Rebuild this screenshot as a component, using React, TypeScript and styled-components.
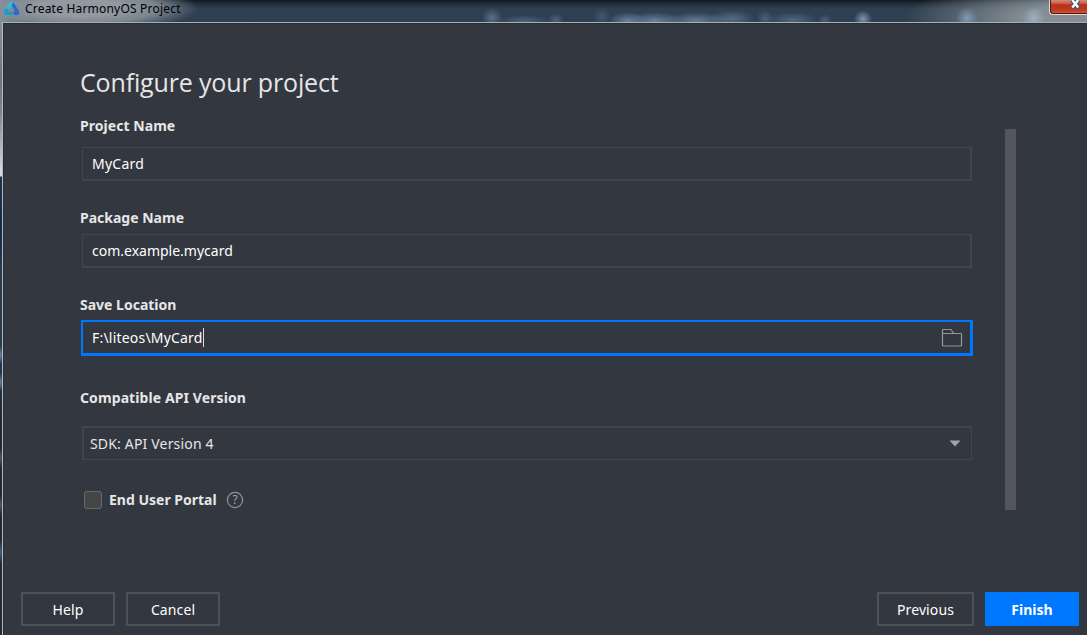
import React from 'react';
import styled, { createGlobalStyle } from 'styled-components';

const panelColor = '#333740';
const fieldBorderColor = '#414550';
const buttonBorderColor = '#4e5155';
const accentColor = '#0077ff';
const textColor = '#e6e6e6';

const GlobalStyle = createGlobalStyle`
  * {
    box-sizing: border-box;
  }

  body {
    margin: 0;
    overflow: hidden;
    font-family: 'Noto Sans', 'Open Sans', sans-serif;
    font-size: 14px;
    color: ${textColor};
  }
`;

const Window = styled.div`
  display: grid;
  grid-template-rows: 22px 1fr;
  width: 1087px;
  height: 635px;
  background: #26394d;
`;

const TitleBar = styled.header`
  display: flex;
  align-items: flex-start;
  justify-content: space-between;
  overflow: hidden;
  background:
    radial-gradient(ellipse 10px 10px at 492px 18px, #5c7187, transparent),
    radial-gradient(ellipse 28px 6px at 524px 21px, #4c6278, transparent),
    radial-gradient(ellipse 8px 7px at 556px 20px, #4c6278, transparent),
    radial-gradient(ellipse 9px 9px at 602px 17px, #43586d, transparent),
    radial-gradient(ellipse 20px 9px at 628px 21px, #6982a0, transparent),
    radial-gradient(ellipse 28px 9px at 655px 21px, #6982a0, transparent),
    radial-gradient(ellipse 34px 9px at 696px 21px, #647c97, transparent),
    radial-gradient(ellipse 24px 9px at 732px 19px, #566d86, transparent),
    radial-gradient(ellipse 9px 9px at 765px 19px, #4b6178, transparent),
    radial-gradient(ellipse 26px 8px at 793px 20px, #4f667e, transparent),
    radial-gradient(ellipse 7px 6px at 825px 20px, #4b6178, transparent),
    radial-gradient(ellipse 9px 9px at 863px 19px, #7c94b0, transparent),
    radial-gradient(ellipse 11px 11px at 967px 18px, #8098b5, transparent),
    radial-gradient(ellipse 11px 11px at 1034px 18px, #9fb0c2, transparent),
    radial-gradient(ellipse 170px 40px at 1075px 18px, #858e95 30%, transparent),
    linear-gradient(#111921, #222f3c 4px, #304051 9px, #2e3f51);
`;

const TitleGroup = styled.div`
  display: flex;
  align-items: center;
  width: 200px;
  height: 22px;
  padding: 0 0 5px 4px;
  background:
    linear-gradient(90deg, #858f9a, transparent 34px),
    radial-gradient(ellipse 120px 24px at 79px 8px, #9299a1 35%, #7b858f 65%, transparent);
`;

const Logo = styled.svg`
  flex: none;
  margin-right: 5px;
`;

const TitleText = styled.span`
  font-size: 12px;
  line-height: 17px;
  letter-spacing: 0.2px;
  white-space: nowrap;
  color: #000;
`;

const CloseButton = styled.button`
  display: flex;
  justify-content: center;
  width: 38px;
  height: 15px;
  padding: 0 0 0 12px;
  border: 1px solid #e3d6d3;
  border-top: 0;
  border-right: 0;
  border-radius: 0 0 0 4px;
  background: linear-gradient(#d88a7a, #c96452 3px, #b8301a 5px, #bd3a20 10px, #d5633c);
  box-shadow: inset 1px -1px 0 #4c1913;
`;

const Frame = styled.div`
  display: grid;
  grid-template-columns: 2px 1fr;
`;

const GlassEdge = styled.div`
  background:
    radial-gradient(ellipse 4px 9px at 0 333px, #6888ab, transparent),
    radial-gradient(ellipse 4px 9px at 0 360px, #6888ab, transparent),
    radial-gradient(ellipse 4px 10px at 0 436px, #5c5c5d, transparent),
    radial-gradient(ellipse 4px 10px at 0 483px, #5c5c5d, transparent),
    radial-gradient(ellipse 4px 12px at 0 530px, #4d6580, transparent),
    linear-gradient(
      #858e9a,
      #6b7482 60px,
      #7c8798 90px,
      #d7d9db 150px,
      #d7d9db 154px,
      #1d3349 155px,
      #122c46 210px,
      #2a3b4d 250px,
      #2a3b4d 320px,
      #1f2937 400px,
      #202c3b
    );
`;

const Dialog = styled.main`
  display: flex;
  flex-direction: column;
  justify-content: space-between;
  border-top: 1px solid #a8b0b6;
  border-left: 1px solid #b4babd;
  background: ${panelColor};
  box-shadow: inset 1px 1px 0 #282e35;
`;

const Body = styled.div`
  display: flex;
  justify-content: space-between;
  padding: 43px 71px 0 77px;
`;

const Form = styled.form`
  display: flex;
  flex-direction: column;
  width: 893px;
`;

const Heading = styled.h1`
  height: 50px;
  margin: 0;
  font-family: 'Open Sans', 'Noto Sans', sans-serif;
  font-size: 25px;
  font-weight: 400;
  line-height: 33px;
  letter-spacing: -0.15px;
`;

const Field = styled.div<{ $height: number; $gap: number }>`
  display: flex;
  flex-direction: column;
  gap: ${(props) => props.$gap}px;
  height: ${(props) => props.$height}px;
`;

const Label = styled.label<{ $spacing?: number }>`
  font-size: 14px;
  font-weight: 700;
  line-height: 20px;
  letter-spacing: ${(props) => props.$spacing || 0}px;
`;

const InputBox = styled.div<{ $spacing?: number }>`
  display: flex;
  align-items: center;
  width: 890px;
  height: 34px;
  margin-left: 2px;
  padding: 0 9px;
  border: solid ${fieldBorderColor};
  border-width: 1px 2px 2px 1px;
  letter-spacing: ${(props) => props.$spacing || 0}px;
  color: #fff;
`;

const FocusedBox = styled(InputBox)`
  width: 892px;
  height: 36px;
  margin-left: 1px;
  padding-right: 7px;
  border-color: ${accentColor};
  border-width: 2px 3px 3px 2px;
  border-radius: 1px;
`;

const SelectBox = styled(InputBox)`
  justify-content: space-between;
  padding: 0 10px 0 6px;
  border-width: 2px 1px 1px 2px;
  border-radius: 1px;
  color: ${textColor};
`;

const Caret = styled.span`
  width: 1px;
  height: 19px;
  background: #ddd;
`;

const FolderIcon = styled.svg`
  margin-left: auto;
`;

const CheckRow = styled.div`
  display: flex;
  align-items: center;
  height: 21px;
  padding-left: 3px;
`;

const Checkbox = styled.span`
  width: 18px;
  height: 18px;
  margin: 0 7px 0 1px;
  border: 1px solid #6b6b6b;
  border-radius: 3px;
  background: #434546;
`;

const HelpIcon = styled.svg`
  margin-left: 9px;
`;

const HelpMark = styled.text`
  font-size: 12px;
  fill: #a0a1a4;
  text-anchor: middle;
`;

const ScrollThumb = styled.div`
  width: 11px;
  height: 381px;
  margin-top: 63px;
  background: #53565f;
`;

const Footer = styled.footer`
  display: flex;
  gap: 11px;
  padding: 0 8px 9px 18px;
`;

const Button = styled.button<{ $width?: number }>`
  width: ${(props) => props.$width || 94}px;
  height: 34px;
  padding: 0;
  border: 2px solid ${buttonBorderColor};
  border-radius: 1px;
  background: transparent;
  font: inherit;
  letter-spacing: 0.1px;
  color: #fff;
`;

const PreviousButton = styled(Button)`
  margin-left: auto;
`;

const PrimaryButton = styled(Button)`
  border-color: ${accentColor};
  background: ${accentColor};
  font-weight: 700;
  letter-spacing: 0;
`;

const App = () => (
  <>
    <GlobalStyle />
    <Window>
      <TitleBar>
        <TitleGroup>
          <Logo width="16" height="15" viewBox="0 0 16 15">
            <path d="M5 2.2 Q8 -1.2 10.6 2.6 L13 7 L9.6 8 L7.6 4.4 L5 8.8 L1.6 7.6 Z" fill="#31bfd8" />
            <path d="M1.6 7.4 L5 8.4 L3.8 10.6 H7.6 L9 14 H2.4 Q-1 13.4 .6 9.4 Z" fill="#1a9bca" />
            <path d="M9.4 1.2 L15.2 10.4 Q16 13.6 13 14 H10.2 L8.6 10.6 H11.2 L7.6 4.2 Z" fill="#2b69d2" />
          </Logo>
          <TitleText>Create HarmonyOS Project</TitleText>
        </TitleGroup>
        <CloseButton aria-label="Close">
          <svg width="14" height="12" viewBox="0 0 14 12">
            <path d="M4 0 L10.5 8 M10.5 0 L4 8" stroke="#46546a" strokeWidth="4.4" />
            <path d="M4.3 0 L10.2 7.5 M10.2 0 L4.3 7.5" stroke="#fff" strokeWidth="2.4" />
          </svg>
        </CloseButton>
      </TitleBar>
      <Frame>
        <GlassEdge />
        <Dialog>
          <Body>
            <Form>
              <Heading>Configure your project</Heading>
              <Field $height={92} $gap={11}>
                <Label $spacing={0.05}>Project Name</Label>
                <InputBox $spacing={0.25}>MyCard</InputBox>
              </Field>
              <Field $height={87} $gap={6}>
                <Label>Package Name</Label>
                <InputBox>com.example.mycard</InputBox>
              </Field>
              <Field $height={93} $gap={5}>
                <Label>Save Location</Label>
                <FocusedBox $spacing={0.2}>
                  F:\liteos\MyCard
                  <Caret />
                  <FolderIcon width="22" height="20" viewBox="0 0 22 20" fill="none" stroke="#949698" strokeWidth="1.2">
                    <path d="M1.5 5.5 V2.2 Q1.5 1.5 2.2 1.5 H10 L12.8 5.5" />
                    <path d="M1.5 5.5 H19.8 Q20.5 5.5 20.5 6.2 V17.3 Q20.5 18 19.8 18 H2.2 Q1.5 18 1.5 17.3 Z" />
                  </FolderIcon>
                </FocusedBox>
              </Field>
              <Field $height={101} $gap={18}>
                <Label $spacing={0.1}>Compatible API Version</Label>
                <SelectBox $spacing={0.17}>
                  SDK: API Version 4
                  <svg width="12" height="7" viewBox="0 0 12 7">
                    <path d="M.5 .5 H11.5 L6 6.5 Z" fill="#a2a3a6" />
                  </svg>
                </SelectBox>
              </Field>
              <CheckRow>
                <Checkbox />
                <Label>End User Portal</Label>
                <HelpIcon width="18" height="18" viewBox="0 0 18 18">
                  <circle cx="9" cy="9" r="7.6" fill="none" stroke="#929396" strokeWidth="1.2" />
                  <HelpMark x="9" y="13.3">?</HelpMark>
                </HelpIcon>
              </CheckRow>
            </Form>
            <ScrollThumb />
          </Body>
          <Footer>
            <Button>Help</Button>
            <Button>Cancel</Button>
            <PreviousButton $width={97}>Previous</PreviousButton>
            <PrimaryButton>Finish</PrimaryButton>
          </Footer>
        </Dialog>
      </Frame>
    </Window>
  </>
);

export default App;
